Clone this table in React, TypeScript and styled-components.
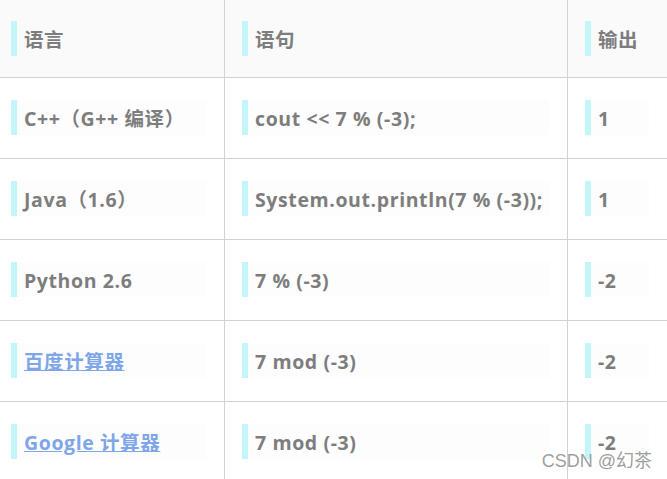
import styled, { createGlobalStyle } from 'styled-components'

const GlobalStyle = createGlobalStyle`
  html, body {
    margin: 0;
    padding: 0;
    background: #ffffff;
    overflow: hidden;
  }
`;

const Page = styled.div`
  position: relative;
  width: 667px;
  height: 479px;
  overflow: hidden;
  font-family: "Open Sans", "Noto Sans CJK SC", sans-serif;
`;

const Table = styled.table`
  border-collapse: collapse;
  margin-left: -7px;
  table-layout: fixed;
  width: 674px;
`;

const Cell = styled.td<{ $head?: boolean }>`
  border: 1px solid #d2d2d2;
  border-top: ${p => (p.$head ? 'none' : '1px solid #d2d2d2')};
  background: ${p => (p.$head ? '#fafafa' : '#ffffff')};
  height: ${p => (p.$head ? 77 : 81)}px;
  padding: 0 18px 0 17px;
  text-align: left;
  vertical-align: middle;
  box-sizing: border-box;
`;

const Quote = styled.div<{ $head?: boolean }>`
  box-sizing: border-box;
  border-left: 6px solid #c3f6fb;
  background: ${p => (p.$head ? '#fafafa' : '#fdfdfd')};
  height: 35px;
  padding: 2px 0 0 7px;
  line-height: 33px;
  font-size: 19.5px;
  letter-spacing: 0.6px;
  font-weight: 700;
  color: #7d7d7d;
  white-space: nowrap;
`;

const Link = styled.a`
  color: #7ea6e9;
  text-decoration: underline;
`;

const Watermark = styled.div`
  position: absolute;
  right: 15px;
  bottom: 7px;
  font-family: "Liberation Sans", "Noto Sans CJK SC", sans-serif;
  font-size: 18px;
  color: rgba(140, 140, 140, 0.85);
`;

const rows = [
  { lang: 'C++（G++ 编译）', code: 'cout << 7 % (-3);', out: '1' },
  { lang: 'Java（1.6）', code: 'System.out.println(7 % (-3));', out: '1' },
  { lang: 'Python 2.6', code: '7 % (-3)', out: '-2' },
  { lang: '百度计算器', code: '7 mod (-3)', out: '-2', link: true },
  { lang: 'Google 计算器', code: '7 mod (-3)', out: '-2', link: true },
]

const App = () => {
  return (
    <Page>
      <GlobalStyle />
      <Table>
        <colgroup>
          <col style={{ width: 231 }} />
          <col style={{ width: 343 }} />
          <col style={{ width: 100 }} />
        </colgroup>
        <thead>
          <tr>
            <Cell as="th" $head><Quote $head>语言</Quote></Cell>
            <Cell as="th" $head><Quote $head>语句</Quote></Cell>
            <Cell as="th" $head><Quote $head>输出</Quote></Cell>
          </tr>
        </thead>
        <tbody>
          {rows.map((r, i) => (
            <tr key={i}>
              <Cell>
                <Quote>{r.link ? <Link href="#">{r.lang}</Link> : r.lang}</Quote>
              </Cell>
              <Cell><Quote>{r.code}</Quote></Cell>
              <Cell><Quote>{r.out}</Quote></Cell>
            </tr>
          ))}
        </tbody>
      </Table>
      <Watermark>CSDN @幻茶</Watermark>
    </Page>
  )
};

export default App;
